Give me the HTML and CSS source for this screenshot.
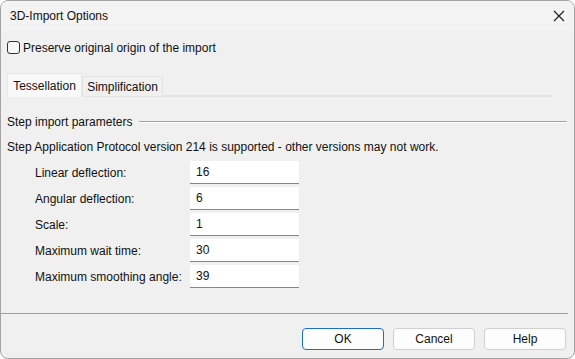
FILE: index.html
```html
<!DOCTYPE html>
<html lang="en">
<head>
    <meta charset="UTF-8">
    <title>3D-Import Options</title>
    <link rel="stylesheet" href="styles.css">
</head>
<body>
    <div class="window">
        <div class="titlebar">
            <span class="title">3D-Import Options</span>
            <span class="close">
                <svg width="12" height="12" viewBox="0 0 12 12"><path d="M1 1 L11 11 M11 1 L1 11" stroke="#1a1a1a" stroke-width="1.1"/></svg>
            </span>
        </div>

        <div class="body">
            <label class="check-row">
                <span class="checkbox"></span>
                Preserve original origin of the import
            </label>

            <div class="tabs">
                <div class="tab active">Tessellation</div>
                <div class="tab">Simplification</div>
            </div>

            <div class="tab-page">
                <div class="group-title">
                    <span>Step import parameters</span>
                    <span class="group-line"></span>
                </div>
                <p class="note">Step Application Protocol version 214 is supported - other versions may not work.</p>

                <div class="form">
                    <span class="label">Linear deflection:</span>
                    <span class="input">16</span>
                    <span class="label">Angular deflection:</span>
                    <span class="input">6</span>
                    <span class="label">Scale:</span>
                    <span class="input">1</span>
                    <span class="label">Maximum wait time:</span>
                    <span class="input">30</span>
                    <span class="label">Maximum smoothing angle:</span>
                    <span class="input">39</span>
                </div>
            </div>
        </div>

        <div class="footer">
            <button class="button default">OK</button>
            <button class="button">Cancel</button>
            <button class="button">Help</button>
        </div>
    </div>
</body>
</html>
```

FILE: styles.css
```css
* {
    margin: 0;
    padding: 0;
    box-sizing: border-box;
}

body {
    font-family: "Liberation Sans", Arial, sans-serif;
    font-size: 12px;
    color: #111;
    background: #ffffff;
    width: 575px;
    height: 359px;
    overflow: hidden;
}

.window {
    width: 575px;
    height: 359px;
    border: 1px solid #a3a3a3;
    border-radius: 8px;
    background: #f0f0f0;
    display: flex;
    flex-direction: column;
    overflow: hidden;
}

.titlebar {
    height: 30px;
    background: #f3f3f3;
    display: flex;
    align-items: center;
    justify-content: space-between;
    padding: 0 9px 0 9px;
    flex-shrink: 0;
}

.close {
    display: flex;
    width: 12px;
    height: 12px;
}

.body {
    flex: 1;
    padding: 0 6px;
    display: flex;
    flex-direction: column;
}

.check-row {
    display: flex;
    align-items: center;
    gap: 3px;
    margin-top: 10px;
    height: 13px;
}

.checkbox {
    width: 13px;
    height: 13px;
    border: 1px solid #333;
    border-radius: 3px;
    background: #f7f7f7;
}

.tabs {
    display: flex;
    align-items: flex-end;
    margin-top: 20px;
    height: 23px;
    border-bottom: 2px solid #e3e3e3;
    margin-right: 15px;
}

.tab {
    width: 81px;
    height: 20px;
    display: flex;
    align-items: center;
    justify-content: center;
    border: 1px solid #e3e3e3;
    border-bottom: none;
    background: #f0f0f0;
    margin-bottom: -1px;
}

.tab.active {
    width: 75px;
    height: 24px;
    background: #f9f9f9;
    margin-bottom: -2px;
    border-color: #e8e8e8;
}

.tab-page {
    padding-top: 17px;
}

.group-title {
    display: flex;
    align-items: center;
    gap: 7px;
    height: 16px;
}

.group-line {
    flex: 1;
    border-top: 1px solid #a0a0a0;
    border-bottom: 1px solid #ffffff;
    margin-right: 1px;
}

.note {
    margin-top: 9px;
    height: 16px;
    line-height: 16px;
}

.form {
    display: grid;
    grid-template-columns: 155px 109px;
    row-gap: 3px;
    align-items: center;
    margin-top: 6px;
    margin-left: 28px;
}

.input {
    height: 23px;
    background: #ffffff;
    border-bottom: 1px solid #868686;
    padding-left: 6px;
    display: flex;
    align-items: center;
}

.footer {
    height: 45px;
    border-top: 1px solid #a0a0a0;
    margin: 0 6px 0 0;
    display: flex;
    justify-content: flex-end;
    align-items: flex-start;
    gap: 9px;
    padding: 14px 2px 0 0;
    flex-shrink: 0;
}

.button {
    font: inherit;
    color: #111;
    width: 82px;
    height: 22px;
    background: #fdfdfd;
    border: 1px solid #d0d0d0;
    border-radius: 4px;
}

.button.default {
    border-color: #1f6fc0;
}
```
